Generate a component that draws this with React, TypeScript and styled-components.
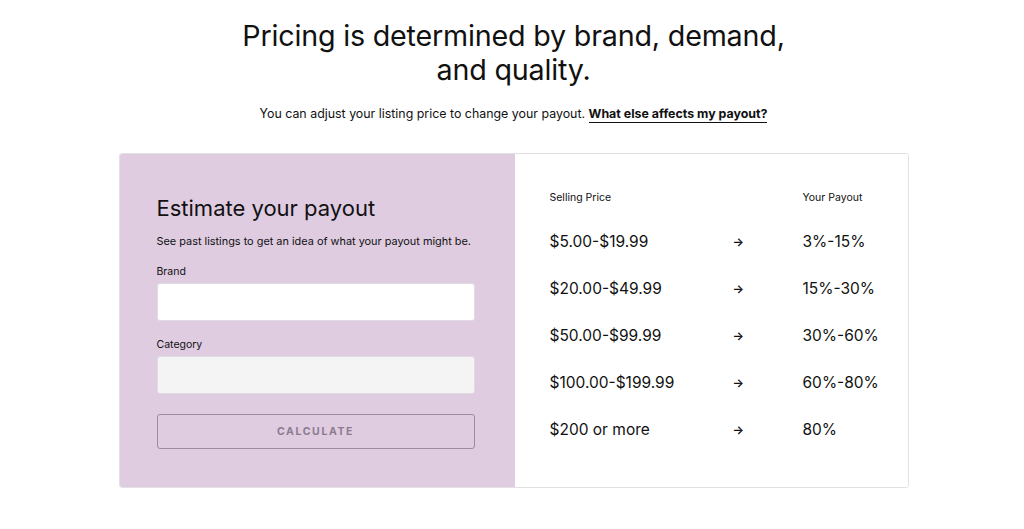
import styled, { createGlobalStyle } from "styled-components";

const GlobalStyle = createGlobalStyle`
  body {
    margin: 0;
    background: #ffffff;
    color: #111111;
    font-family: "Inter", "Liberation Sans", sans-serif;
  }
`;

const Page = styled.div`
  display: flex;
  flex-direction: column;
  align-items: center;
  padding: 19px 0 0 3px;
`;

const Heading = styled.h1`
  margin: 0;
  font-size: 28.7px;
  font-weight: 400;
  line-height: 34px;
  text-align: center;
  letter-spacing: -0.2px;
`;

const Intro = styled.p`
  margin: 18px 0 0 0;
  font-size: 12.4px;
  line-height: 18px;
  text-align: center;
`;

const IntroLink = styled.a`
  color: #111111;
  font-weight: 700;
  text-decoration: none;
  border-bottom: 1.5px solid #111111;
  padding-bottom: 1px;
`;

const Card = styled.div`
  box-sizing: border-box;
  display: grid;
  grid-template-columns: 395px 1fr;
  width: 790px;
  margin-top: 30px;
  border: 1px solid #e1e1e1;
  border-radius: 3px;
  overflow: hidden;
`;

const EstimatePanel = styled.div`
  display: flex;
  flex-direction: column;
  background: #dfcce1;
  padding: 40px 40px 38px 37px;
`;

const PanelTitle = styled.h2`
  margin: 0;
  font-size: 22px;
  font-weight: 400;
  line-height: 28px;
`;

const PanelText = styled.p`
  margin: 12px 0 0 0;
  font-size: 10.9px;
  line-height: 14px;
`;

const Label = styled.label`
  display: block;
  margin-top: 17px;
  font-size: 10.5px;
  line-height: 14px;
`;

const Field = styled.input<{ $muted?: boolean }>`
  display: block;
  box-sizing: border-box;
  width: 100%;
  height: 38px;
  margin-top: 4px;
  border: 1px solid #e2dbe3;
  border-radius: 3px;
  background: ${({ $muted }) => ($muted ? "#f4f4f4" : "#ffffff")};
  font-family: inherit;
  outline: none;
`;

const CalcButton = styled.button`
  box-sizing: border-box;
  width: 100%;
  height: 35px;
  margin-top: 20px;
  border: 1px solid #9d8aa0;
  border-radius: 3px;
  background: transparent;
  color: #8c7b8f;
  font-family: inherit;
  font-size: 10.5px;
  font-weight: 700;
  letter-spacing: 1.6px;
`;

const RatesPanel = styled.div`
  background: #ffffff;
  padding: 35px 20px 0 35px;
`;

const RateRow = styled.div<{ $head?: boolean }>`
  display: grid;
  grid-template-columns: 183px 70px 1fr;
  align-items: center;
  height: ${({ $head }) => ($head ? "16px" : "47px")};
  margin-bottom: ${({ $head }) => ($head ? "13px" : "0")};
  font-size: ${({ $head }) => ($head ? "10.5px" : "15.5px")};
`;

const Arrow = styled.span`
  font-size: 12px;
  font-weight: 600;
`;

const rates = [
  ["$5.00-$19.99", "3%-15%"],
  ["$20.00-$49.99", "15%-30%"],
  ["$50.00-$99.99", "30%-60%"],
  ["$100.00-$199.99", "60%-80%"],
  ["$200 or more", "80%"],
];

export default function App() {
  return (
    <>
      <GlobalStyle />
      <Page>
        <Heading>
          Pricing is determined by brand, demand,
          <br />
          and quality.
        </Heading>
        <Intro>
          You can adjust your listing price to change your payout.{" "}
          <IntroLink href="#">What else affects my payout?</IntroLink>
        </Intro>
        <Card>
          <EstimatePanel>
            <PanelTitle>Estimate your payout</PanelTitle>
            <PanelText>
              See past listings to get an idea of what your payout might be.
            </PanelText>
            <Label>Brand</Label>
            <Field />
            <Label>Category</Label>
            <Field $muted />
            <CalcButton>CALCULATE</CalcButton>
          </EstimatePanel>
          <RatesPanel>
            <RateRow $head>
              <span>Selling Price</span>
              <span />
              <span>Your Payout</span>
            </RateRow>
            {rates.map(([price, payout]) => (
              <RateRow key={price}>
                <span>{price}</span>
                <Arrow>→</Arrow>
                <span>{payout}</span>
              </RateRow>
            ))}
          </RatesPanel>
        </Card>
      </Page>
    </>
  );
}
